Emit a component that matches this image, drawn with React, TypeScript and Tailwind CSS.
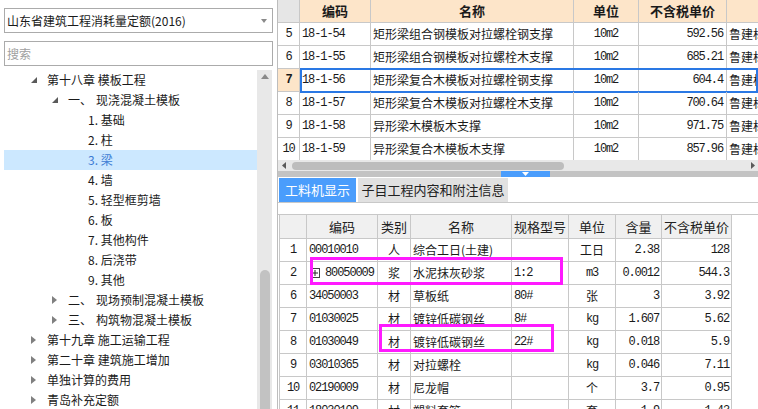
import React from "react";
import clsx from "clsx";

const mono = "font-['Liberation_Mono','Noto_Sans_CJK_SC',monospace] text-[12px] tracking-[-1.1px]";

type TreeRow = { level: 0 | 1 | 2; open?: boolean; num?: string; label: string; selected?: boolean };

const tree: TreeRow[] = [
  { level: 0, open: true, label: "第十八章 模板工程" },
  { level: 1, open: true, num: "一、", label: "现浇混凝土模板" },
  { level: 2, label: "1. 基础" },
  { level: 2, label: "2. 柱" },
  { level: 2, label: "3. 梁", selected: true },
  { level: 2, label: "4. 墙" },
  { level: 2, label: "5. 轻型框剪墙" },
  { level: 2, label: "6. 板" },
  { level: 2, label: "7. 其他构件" },
  { level: 2, label: "8. 后浇带" },
  { level: 2, label: "9. 其他" },
  { level: 1, open: false, num: "二、", label: "现场预制混凝土模板" },
  { level: 1, open: false, num: "三、", label: "构筑物混凝土模板" },
  { level: 0, open: false, label: "第十九章 施工运输工程" },
  { level: 0, open: false, label: "第二十章 建筑施工增加" },
  { level: 0, open: false, label: "单独计算的费用" },
  { level: 0, open: false, label: "青岛补充定额" },
];

const quotas = [
  { no: "5", code: "18-1-54", name: "矩形梁组合钢模板对拉螺栓钢支撑", price: "592.56" },
  { no: "6", code: "18-1-55", name: "矩形梁组合钢模板对拉螺栓木支撑", price: "685.21" },
  { no: "7", code: "18-1-56", name: "矩形梁复合木模板对拉螺栓钢支撑", price: "604.4", selected: true },
  { no: "8", code: "18-1-57", name: "矩形梁复合木模板对拉螺栓木支撑", price: "700.64" },
  { no: "9", code: "18-1-58", name: "异形梁木模板木支撑", price: "971.75" },
  { no: "10", code: "18-1-59", name: "异形梁复合木模板木支撑", price: "857.96" },
];

const items = [
  { no: "1", code: "00010010", kind: "人", name: "综合工日(土建)", spec: "", unit: "工日", unitCn: true, qty: "2.38", price: "128" },
  { no: "2", code: "80050009", kind: "浆", name: "水泥抹灰砂浆", spec: "1:2", unit: "m3", qty: "0.0012", price: "544.3", plus: true },
  { no: "6", code: "34050003", kind: "材", name: "草板纸", spec: "80#", unit: "张", unitCn: true, qty: "3", price: "3.92" },
  { no: "7", code: "01030025", kind: "材", name: "镀锌低碳钢丝", spec: "8#", unit: "kg", qty: "1.607", price: "5.62" },
  { no: "8", code: "01030049", kind: "材", name: "镀锌低碳钢丝", spec: "22#", unit: "kg", qty: "0.018", price: "5.9" },
  { no: "9", code: "03010365", kind: "材", name: "对拉螺栓", spec: "", unit: "kg", qty: "0.046", price: "7.11" },
  { no: "10", code: "02190009", kind: "材", name: "尼龙帽", spec: "", unit: "个", unitCn: true, qty: "3.7", price: "0.95" },
  { no: "11", code: "18030109", kind: "材", name: "塑料套管", spec: "", unit: "套", unitCn: true, qty: "1.9", price: "1.43" },
];

const Cell: React.FC<{ className?: string; children?: React.ReactNode }> = ({ className, children }) => (
  <div className={clsx("shrink-0 h-full flex items-center border-r border-[#c8c8c8] overflow-hidden whitespace-nowrap", className)}>
    {children}
  </div>
);

const Expanded = () => (
  <svg width="6" height="6" viewBox="0 0 6 6">
    <polygon points="6,0 6,6 0,6" fill="#5a5a5a" />
  </svg>
);

const Collapsed = () => (
  <svg width="5" height="8" viewBox="0 0 5 8">
    <polygon points="0,0 5,4 0,8" fill="#808080" />
  </svg>
);

const App: React.FC = () => {
  return (
    <div className="w-[758px] h-[409px] flex overflow-hidden bg-white text-[#1a1a1a] font-['Noto_Sans_CJK_SC',sans-serif]">
      {/* left: quota library tree */}
      <div className="w-[277px] shrink-0 flex flex-col">
        <div className="mt-[8px] mx-[4px] h-[25px] border border-[#ababab] flex items-center pl-[2px] pr-[5px] text-[12px]">
          <span className="flex-1">山东省建筑工程消耗量定额(2016)</span>
          <svg width="6" height="4" viewBox="0 0 6 4">
            <polygon points="0,0 6,0 3,4" fill="#8a8a8a" />
          </svg>
        </div>
        <div className="mt-[8px] mx-[4px] h-[25px] border border-[#ababab] flex items-center pl-[2px] text-[12px] text-[#a0a0a0]">
          搜索
        </div>
        <div className="mt-[4px] flex flex-1 min-h-0">
          <div className="w-[253px] ml-[4px] flex flex-col text-[12px]">
            {tree.map((row, i) => (
              <div
                key={i}
                className={clsx(
                  "h-[20px] shrink-0 flex items-center whitespace-nowrap",
                  row.level === 0 && "pl-[27px]",
                  row.level === 1 && "pl-[48px]",
                  row.level === 2 && "pl-[84px]",
                  row.selected && "bg-[#cce8ff] text-[#3b7bd4]"
                )}
              >
                {row.level < 2 && (
                  <span className="w-[16px] flex items-center">{row.open ? <Expanded /> : <Collapsed />}</span>
                )}
                {row.num && <span className="w-[28px]">{row.num}</span>}
                <span>{row.label}</span>
              </div>
            ))}
          </div>
          <div className="w-[15px] bg-[#e8e8e8] flex flex-col items-center">
            <svg className="mt-[4px]" width="8" height="5" viewBox="0 0 8 5">
              <polygon points="4,0 8,5 0,5" fill="#8a8a8a" />
            </svg>
            <div className="mt-[191px] w-[10px] flex-1 rounded-t-full bg-[#c2c2c2]" />
          </div>
        </div>
      </div>

      <div className="w-[1px] shrink-0 bg-[#bdbdbd]" />

      {/* right */}
      <div className="w-[480px] shrink-0 flex flex-col">
        {/* quota list */}
        <div className="h-[160px] overflow-hidden flex flex-col">
          <div className="h-[23px] shrink-0 flex border-b border-[#c8c8c8] text-[13px] font-bold">
            <Cell className="w-[22px] bg-[#e6e6e6]" />
            <Cell className="w-[71px] bg-[#fde5c9] justify-center">编码</Cell>
            <Cell className="w-[203px] bg-[#fde5c9] justify-center">名称</Cell>
            <Cell className="w-[65px] bg-[#fde5c9] justify-center">单位</Cell>
            <Cell className="w-[88px] bg-[#fde5c9] justify-center">不含税单价</Cell>
            <Cell className="flex-1 bg-[#fde5c9] border-r-0" />
          </div>
          {quotas.map((q) => (
            <div key={q.no} className="relative h-[23px] shrink-0 flex border-b border-[#c8c8c8] text-[12px]">
              <Cell className={clsx("w-[22px] justify-center", mono, q.selected && "bg-[#fde5c9] font-bold")}>{q.no}</Cell>
              <Cell className={clsx("w-[71px] pl-[2px]", mono)}>{q.code}</Cell>
              <Cell className="w-[203px] pl-[2px]">{q.name}</Cell>
              <Cell className={clsx("w-[65px] justify-center", mono)}>10m2</Cell>
              <Cell className={clsx("w-[88px] justify-end pr-[3px]", mono)}>{q.price}</Cell>
              <Cell className="flex-1 pl-[2px] border-r-0">鲁建标</Cell>
              {q.selected && (
                <div className="absolute left-[22px] right-0 top-[-1px] h-[25px] border-2 border-[#2a78e4]" />
              )}
            </div>
          ))}
        </div>

        {/* horizontal scrollbar */}
        <div className="h-[11px] shrink-0 bg-[#e8e8e8] flex items-center">
          <svg className="ml-[4px]" width="4" height="7" viewBox="0 0 4 7">
            <polygon points="4,0 4,7 0,3.5" fill="#5a5a5a" />
          </svg>
          <div className="ml-[6px] w-[272px] h-[8px] rounded-full bg-[#bdbdbd]" />
          <div className="flex-1" />
          <svg className="mr-[3px]" width="4" height="7" viewBox="0 0 4 7">
            <polygon points="0,0 4,3.5 0,7" fill="#5a5a5a" />
          </svg>
        </div>

        {/* splitter */}
        <div className="h-[6px] shrink-0 bg-[#c3c3c3] flex">
          <div className="ml-[223px] w-[49px] h-full bg-[#4a9dfc] flex items-center justify-center">
            <svg width="7" height="4" viewBox="0 0 7 4">
              <polygon points="0,0 7,0 3.5,4" fill="#ffffff" />
            </svg>
          </div>
        </div>

        {/* tabs */}
        <div className="mt-[1px] h-[25px] shrink-0 flex gap-[2px] pl-[1px] border-b border-[#c8c8c8] text-[13px]">
          <div className="w-[77px] flex items-center justify-center bg-[#4a9dfc] text-white">工料机显示</div>
          <div className="w-[150px] flex items-center justify-center bg-[#e1e1e1] text-[#222]">子目工程内容和附注信息</div>
        </div>
        <div className="h-[12px] shrink-0 border-b border-[#c8c8c8]" />

        {/* resource list */}
        <div className="relative ml-[1px] border-l border-[#c8c8c8] flex flex-col flex-1 min-h-0">
          <div className="h-[24px] shrink-0 flex border-b border-[#c8c8c8] bg-[#f0f0f0] text-[13px] text-[#222] w-[452px]">
            <Cell className="w-[27px]" />
            <Cell className="w-[71px] justify-center">编码</Cell>
            <Cell className="w-[33px] justify-center">类别</Cell>
            <Cell className="w-[101px] justify-center">名称</Cell>
            <Cell className="w-[57px] justify-center">规格型号</Cell>
            <Cell className="w-[47px] justify-center">单位</Cell>
            <Cell className="w-[46px] justify-center">含量</Cell>
            <Cell className="w-[70px] justify-center">不含税单价</Cell>
          </div>
          {items.map((it) => (
            <div key={it.no} className="h-[23px] shrink-0 flex border-b border-[#c8c8c8] text-[12px] w-[452px]">
              <Cell className={clsx("w-[27px] justify-center", mono)}>{it.no}</Cell>
              <Cell className={clsx("w-[71px] pl-[2px]", mono)}>
                {it.plus && (
                  <svg className="ml-[1px] mr-[5px]" width="10" height="10" viewBox="0 0 10 10">
                    <rect x="0.5" y="0.5" width="9" height="9" fill="white" stroke="#444" />
                    <path d="M2 5h6M5 2v6" stroke="#222" />
                  </svg>
                )}
                {it.code}
              </Cell>
              <Cell className="w-[33px] justify-center">{it.kind}</Cell>
              <Cell className="w-[101px] pl-[2px]">{it.name}</Cell>
              <Cell className={clsx("w-[57px] pl-[2px]", mono)}>{it.spec}</Cell>
              <Cell className={clsx("w-[47px] justify-center", !it.unitCn && mono)}>{it.unit}</Cell>
              <Cell className={clsx("w-[46px] justify-end pr-[2px]", mono)}>{it.qty}</Cell>
              <Cell className={clsx("w-[70px] justify-end pr-[2px]", mono)}>{it.price}</Cell>
            </div>
          ))}
          {/* highlight marks */}
          <div className="absolute left-[30px] top-[42px] w-[253px] h-[28px] border-[3px] border-[#ff1aff]" />
          <div className="absolute left-[99px] top-[109px] w-[175px] h-[28px] border-[3px] border-[#ff1aff]" />
        </div>
      </div>
    </div>
  );
};

export default App;
